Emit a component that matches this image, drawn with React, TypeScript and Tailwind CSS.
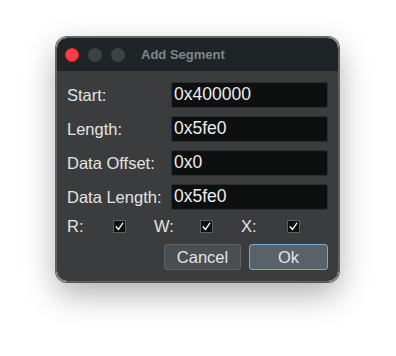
import React from "react"

const fields = [
  { label: "Start:", value: "0x400000" },
  { label: "Length:", value: "0x5fe0" },
  { label: "Data Offset:", value: "0x0" },
  { label: "Data Length:", value: "0x5fe0" },
]

function Check({ label }: { label: string }) {
  return (
    <div className="flex items-center w-[89px]">
      <span className="w-[46px] text-[16.5px] leading-none">{label}</span>
      <span className="w-[13px] h-[13px] bg-[#0f1010] border border-[#5c5f61] flex items-center justify-center">
        <svg width="9" height="9" viewBox="0 0 9 9" fill="none">
          <path d="M1.2 4.8 L3.4 7.6 L7.8 1.2" stroke="#f0f0f0" strokeWidth="1.4" strokeLinecap="round" strokeLinejoin="round" />
        </svg>
      </span>
    </div>
  )
}

export default function App() {
  return (
    <div className="w-[396px] h-[356px] bg-white overflow-hidden" style={{ fontFamily: '"Liberation Sans", Arial, sans-serif' }}>
      <div className="ml-[56px] mt-[37px] w-[283px] h-[245px] rounded-[11px] overflow-hidden border border-[#5e6264] shadow-[0_12px_32px_rgba(0,0,0,0.32),0_0_0_1px_rgba(0,0,0,0.55)] flex flex-col">
        {/* TITLE BAR */}
        <div className="h-[33px] bg-[#1f2426] flex items-center pl-[8px] shrink-0">
          <span className="w-[14px] h-[14px] rounded-full bg-[#fe3c46] border border-[#d92a33]"></span>
          <span className="w-[14px] h-[14px] rounded-full bg-[#3d4245] ml-[9px]"></span>
          <span className="w-[14px] h-[14px] rounded-full bg-[#3d4245] ml-[9px]"></span>
          <span className="ml-[16px] text-[13px] font-bold text-[#80868a]">Add Segment</span>
        </div>
        {/* BODY */}
        <div className="flex-1 bg-[#3a3c3d] px-[10px] pt-[11px] text-[#e4e4e4]">
          <div className="flex flex-col gap-[8px]">
            {fields.map((f) => (
              <div key={f.label} className="flex items-center">
                <span className="w-[104px] text-[16.5px] leading-none">{f.label}</span>
                <div className="flex-1 h-[26px] bg-[#0e0f0f] border border-[#2b2d2e] rounded-[2px] flex items-center px-[2px] text-[17.5px] leading-none text-[#ececec]">
                  {f.value}
                </div>
              </div>
            ))}
          </div>
          <div className="flex items-center mt-[10px] h-[13px]">
            <Check label="R:" />
            <Check label="W:" />
            <Check label="X:" />
          </div>
          <div className="flex justify-end gap-[8px] mt-[11px]">
            <button className="w-[77px] h-[26px] bg-[#4b4e50] border border-[#5f6365] rounded-[3px] text-[16.5px] leading-none text-[#e4e4e4]">
              Cancel
            </button>
            <button className="w-[79px] h-[26px] bg-[#586369] border border-[#6fb0cf] rounded-[3px] text-[16.5px] leading-none text-[#e4e4e4]">
              Ok
            </button>
          </div>
        </div>
      </div>
    </div>
  )
}
